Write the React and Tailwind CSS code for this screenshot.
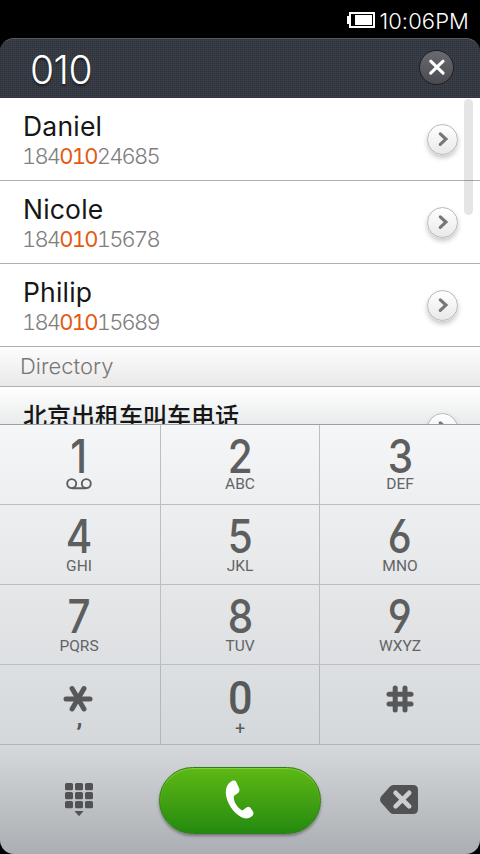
import React from "react";

const LIGHT = "font-['Inter','Noto_Sans_CJK_SC',sans-serif]";

const contacts = [
  { name: "Daniel", pre: "184", hit: "010", post: "24685" },
  { name: "Nicole", pre: "184", hit: "010", post: "15678" },
  { name: "Philip", pre: "184", hit: "010", post: "15689" },
];

function Chevron() {
  return (
    <span className="flex size-[31px] shrink-0 items-center justify-center rounded-full border border-[#b9b9b9] bg-linear-to-b from-white to-[#e9e9e9] shadow-[0_3px_5px_rgba(0,0,0,0.22)]">
      <svg width="31" height="31" viewBox="0 0 31 31" fill="none" stroke="#777" strokeWidth="3.2" strokeLinecap="round" className="shrink-0">
        <path d="M13.3 9.9 L18.9 15.1 L13.3 20.3" />
      </svg>
    </span>
  );
}

function Contact({ name, pre, hit, post }) {
  return (
    <div className="flex h-[83px] items-start justify-between border-b border-[#b0b0b0] pr-[22px] pl-[23px]">
      <div className="pt-[13px]">
        <div className="h-[30px] text-[26.5px] leading-[31px] tracking-[0.2px] text-[#161616]">{name}</div>
        <div className="-ml-px h-[30px] text-[22px] leading-[30px] font-light tracking-[-1.8px] text-[#808080] tabular-nums">
          {pre}
          <span className="font-[380] text-[#e35a14]">{hit}</span>
          {post}
        </div>
      </div>
      <div className="pt-[26px]">
        <Chevron />
      </div>
    </div>
  );
}

function Voicemail() {
  return (
    <svg width="26" height="12" viewBox="0 0 26 12" fill="none" stroke="#5c5e60" strokeWidth="1.9" className="mb-[2px]">
      <circle cx="5.7" cy="5.6" r="4.5" />
      <circle cx="20.3" cy="5.6" r="4.5" />
      <path d="M5.7 10.3 H20.3" />
    </svg>
  );
}

function Star() {
  return (
    <svg width="30" height="28" viewBox="0 0 30 28" stroke="#56585a" strokeWidth="5" strokeLinecap="round" aria-label="*">
      <line x1="3" y1="14" x2="27" y2="14" />
      <line x1="9.1" y1="3.5" x2="21" y2="24" />
      <line x1="21" y1="3.5" x2="9.1" y2="24" />
    </svg>
  );
}

function Pound() {
  return (
    <svg width="28" height="28" viewBox="0 0 28 28" stroke="#56585a" strokeWidth="5" strokeLinecap="round" aria-label="#">
      <line x1="3" y1="9.2" x2="25" y2="9.2" />
      <line x1="3" y1="19" x2="25" y2="19" />
      <line x1="9.2" y1="3" x2="9.2" y2="25" />
      <line x1="19" y1="3" x2="19" y2="25" />
    </svg>
  );
}

const rows = [
  {
    box: "pt-[11px]", gap: "h-[16px]",
    keys: [["1", <Voicemail />], ["2", "ABC"], ["3", "DEF"]],
  },
  {
    box: "pt-[11px]", gap: "h-[18px]",
    keys: [["4", "GHI"], ["5", "JKL"], ["6", "MNO"]],
  },
  {
    box: "pt-[11px]", gap: "h-[18px]",
    keys: [["7", "PQRS"], ["8", "TUV"], ["9", "WXYZ"]],
  },
];

function Key({ digit, sub, box, gap, last, first }) {
  return (
    <div className={`flex flex-col items-center overflow-hidden ${box} ${last ? "" : "border-r border-[#bbbfc2]"} ${first ? "pr-[2px]" : ""}`}>
      <div className="flex h-10 scale-x-[0.88] items-center justify-center font-['Inter',sans-serif] text-[46px] leading-[40px] font-[470] text-[#5c5e60] [font-feature-settings:'cv03','cv04']">
        {digit}
      </div>
      <div className={`flex ${gap} items-end justify-center font-['Roboto',sans-serif] text-[15.5px] leading-[16px] text-[#626466]`}>{sub}</div>
    </div>
  );
}

export default function App() {
  return (
    <div className={`flex h-[854px] w-[480px] flex-col overflow-hidden bg-black ${LIGHT}`}>
      <div className="flex h-[38px] shrink-0 items-center justify-end pt-[4px] pr-[11px] text-white">
        <svg width="28" height="16" viewBox="0 0 28 16" className="mr-[4px] mb-[2px]">
          <rect x="0" y="4" width="3" height="8" fill="#fff" />
          <rect x="3" y="1" width="24" height="14" fill="none" stroke="#fff" strokeWidth="2" />
          <rect x="8" y="3" width="17" height="10" fill="#fff" />
        </svg>
        <span className="text-[22px] leading-[24px] font-[350] tracking-[0.1px]">10:06PM</span>
      </div>

      <div className="flex h-[60px] shrink-0 items-start justify-between rounded-t-[14px] border-t border-[#555960] bg-[#393d46] bg-[radial-gradient(circle_at_0.5px_0.5px,#2c2f37_0.7px,transparent_0.9px)] bg-size-[2px_2px] pr-[26px] pl-[30px]">
        <span className="pt-[7px] text-[39px] leading-[48px] font-light tracking-[-0.5px] text-white [text-shadow:0_2px_2px_rgba(0,0,0,0.5)]">010</span>
        <span className="mt-[11px] flex size-[35px] items-center justify-center rounded-full border border-[#1c1e24] bg-linear-to-b from-[#696b70] to-[#494b50]">
          <svg width="33" height="33" viewBox="0 0 33 33" stroke="#fff" strokeWidth="3" strokeLinecap="round" className="shrink-0">
            <line x1="10.7" y1="10.2" x2="23.1" y2="22.2" />
            <line x1="23.1" y1="10.2" x2="10.7" y2="22.2" />
          </svg>
        </span>
      </div>

      <div className="relative h-[326px] shrink-0 overflow-hidden bg-white">
        {contacts.map((c) => (
          <Contact key={c.name} {...c} />
        ))}
        <div className="h-[40px] border-b border-[#b0b0b0] bg-linear-to-b from-[#fdfdfd] to-[#e9e9e9] pl-[20px] text-[22px] leading-[38px] font-light text-[#777]">
          Directory
        </div>
        <div className="flex h-[83px] items-start justify-between bg-linear-to-b from-white to-[#ced1d4] pr-[22px] pl-[23px]">
          <div className="pt-3 font-['Noto_Sans_CJK_SC',sans-serif] text-[24px] leading-[31px] font-medium text-[#161616]">北京出租车叫车电话</div>
          <div className="pt-[26px]">
            <Chevron />
          </div>
        </div>
        <div className="absolute top-px left-[464px] h-[116px] w-[9px] rounded-full bg-black/10" />
      </div>

      <div className="flex h-[430px] shrink-0 flex-col overflow-hidden rounded-b-[14px] border-t border-[#9da0a3]">
        <div className="flex flex-col bg-linear-to-b from-[#f5f6f7] via-[#e6e7e9] via-50% to-[#d4d8db]">
          {rows.map((r, i) => (
            <div key={i} className="grid h-20 grid-cols-[161px_159px_160px] border-b border-[#bbbfc2]">
              {r.keys.map(([d, s], j) => (
                <Key key={d} digit={d} sub={s} box={r.box} gap={r.gap} last={j === 2} first={j === 0} />
              ))}
            </div>
          ))}
          <div className="grid h-20 grid-cols-[161px_159px_160px] border-b border-[#b1b5b8] text-[#56585a]">
            <div className="flex flex-col items-center border-r border-[#b3b7ba] pt-[20px] pr-[4px]">
              <Star />
              <span className="pl-[3px] font-['Roboto',sans-serif] text-[24px] leading-[10px] font-bold">,</span>
            </div>
            <div className="flex flex-col items-center border-r border-[#b3b7ba] pt-[13px]">
              <div className="h-10 scale-x-[0.92] font-['Roboto',sans-serif] text-[47px] leading-[40px] font-medium">0</div>
              <span className="font-['Roboto',sans-serif] text-[18px] leading-[22px]">+</span>
            </div>
            <div className="flex flex-col items-center pt-[20px]">
              <Pound />
            </div>
          </div>
        </div>

        <div className="grid h-[109px] grid-cols-[159px_162px_159px] bg-linear-to-b from-[#d6d9dc] to-[#abaeb2]">
          <div className="flex justify-center pt-[38px] pr-[2px]">
            <svg width="28" height="34" viewBox="0 0 28 34" fill="#505254">
              {[0, 9, 18].map((y) =>
                [0, 10, 20].map((x) => <rect key={`${x}-${y}`} x={x} y={y} width="8" height="7.3" rx="1.6" />)
              )}
              <path d="M9.5 28 H18.5 L14 33.2 Z" />
            </svg>
          </div>
          <div className="pt-[22px]">
            <div className="flex h-[67px] justify-center rounded-full border border-[#2f7d16] bg-linear-to-b from-[#5db914] to-[#238a10] shadow-[0_2px_3px_rgba(0,0,0,0.35),inset_0_1px_1px_rgba(160,220,90,0.6)]">
              <svg width="40" height="50" viewBox="0 0 40 50" fill="#fff" className="mt-[8px]">
                <path d="M10.8 5.8 C12.5 4 15.4 4.3 16.2 6 L19.2 12.6 C19.8 14.2 19.5 15.8 18.3 16.8 L13.9 20 C12.8 25.5 18 32.6 22.4 34.5 L26.8 31.3 C28.1 30.3 29.3 30.6 30.4 31.8 L33 35.5 C34 37.2 33.4 39.2 31.6 40.5 C28.8 42.6 25 43.2 21 41 C13 36.5 6.4 26.5 5.8 17 C5.6 12 7.2 8.2 10.8 5.8 Z" />
              </svg>
            </div>
          </div>
          <div className="flex justify-center pt-[40px] pr-[3px]">
            <svg width="38" height="29" viewBox="0 0 38 29">
              <path d="M13.5 0 H33 Q38 0 38 5 V24 Q38 29 33 29 H13.5 Q11.5 29 10 27.5 L1.3 17.8 Q-1.3 14.5 1.3 11.2 L10 1.5 Q11.5 0 13.5 0 Z" fill="#505254" />
              <path d="M15.6 7.8 L29.2 21.4 M29.2 7.8 L15.6 21.4" stroke="#cbced1" strokeWidth="4.6" strokeLinecap="round" />
            </svg>
          </div>
        </div>
      </div>
    </div>
  );
}
